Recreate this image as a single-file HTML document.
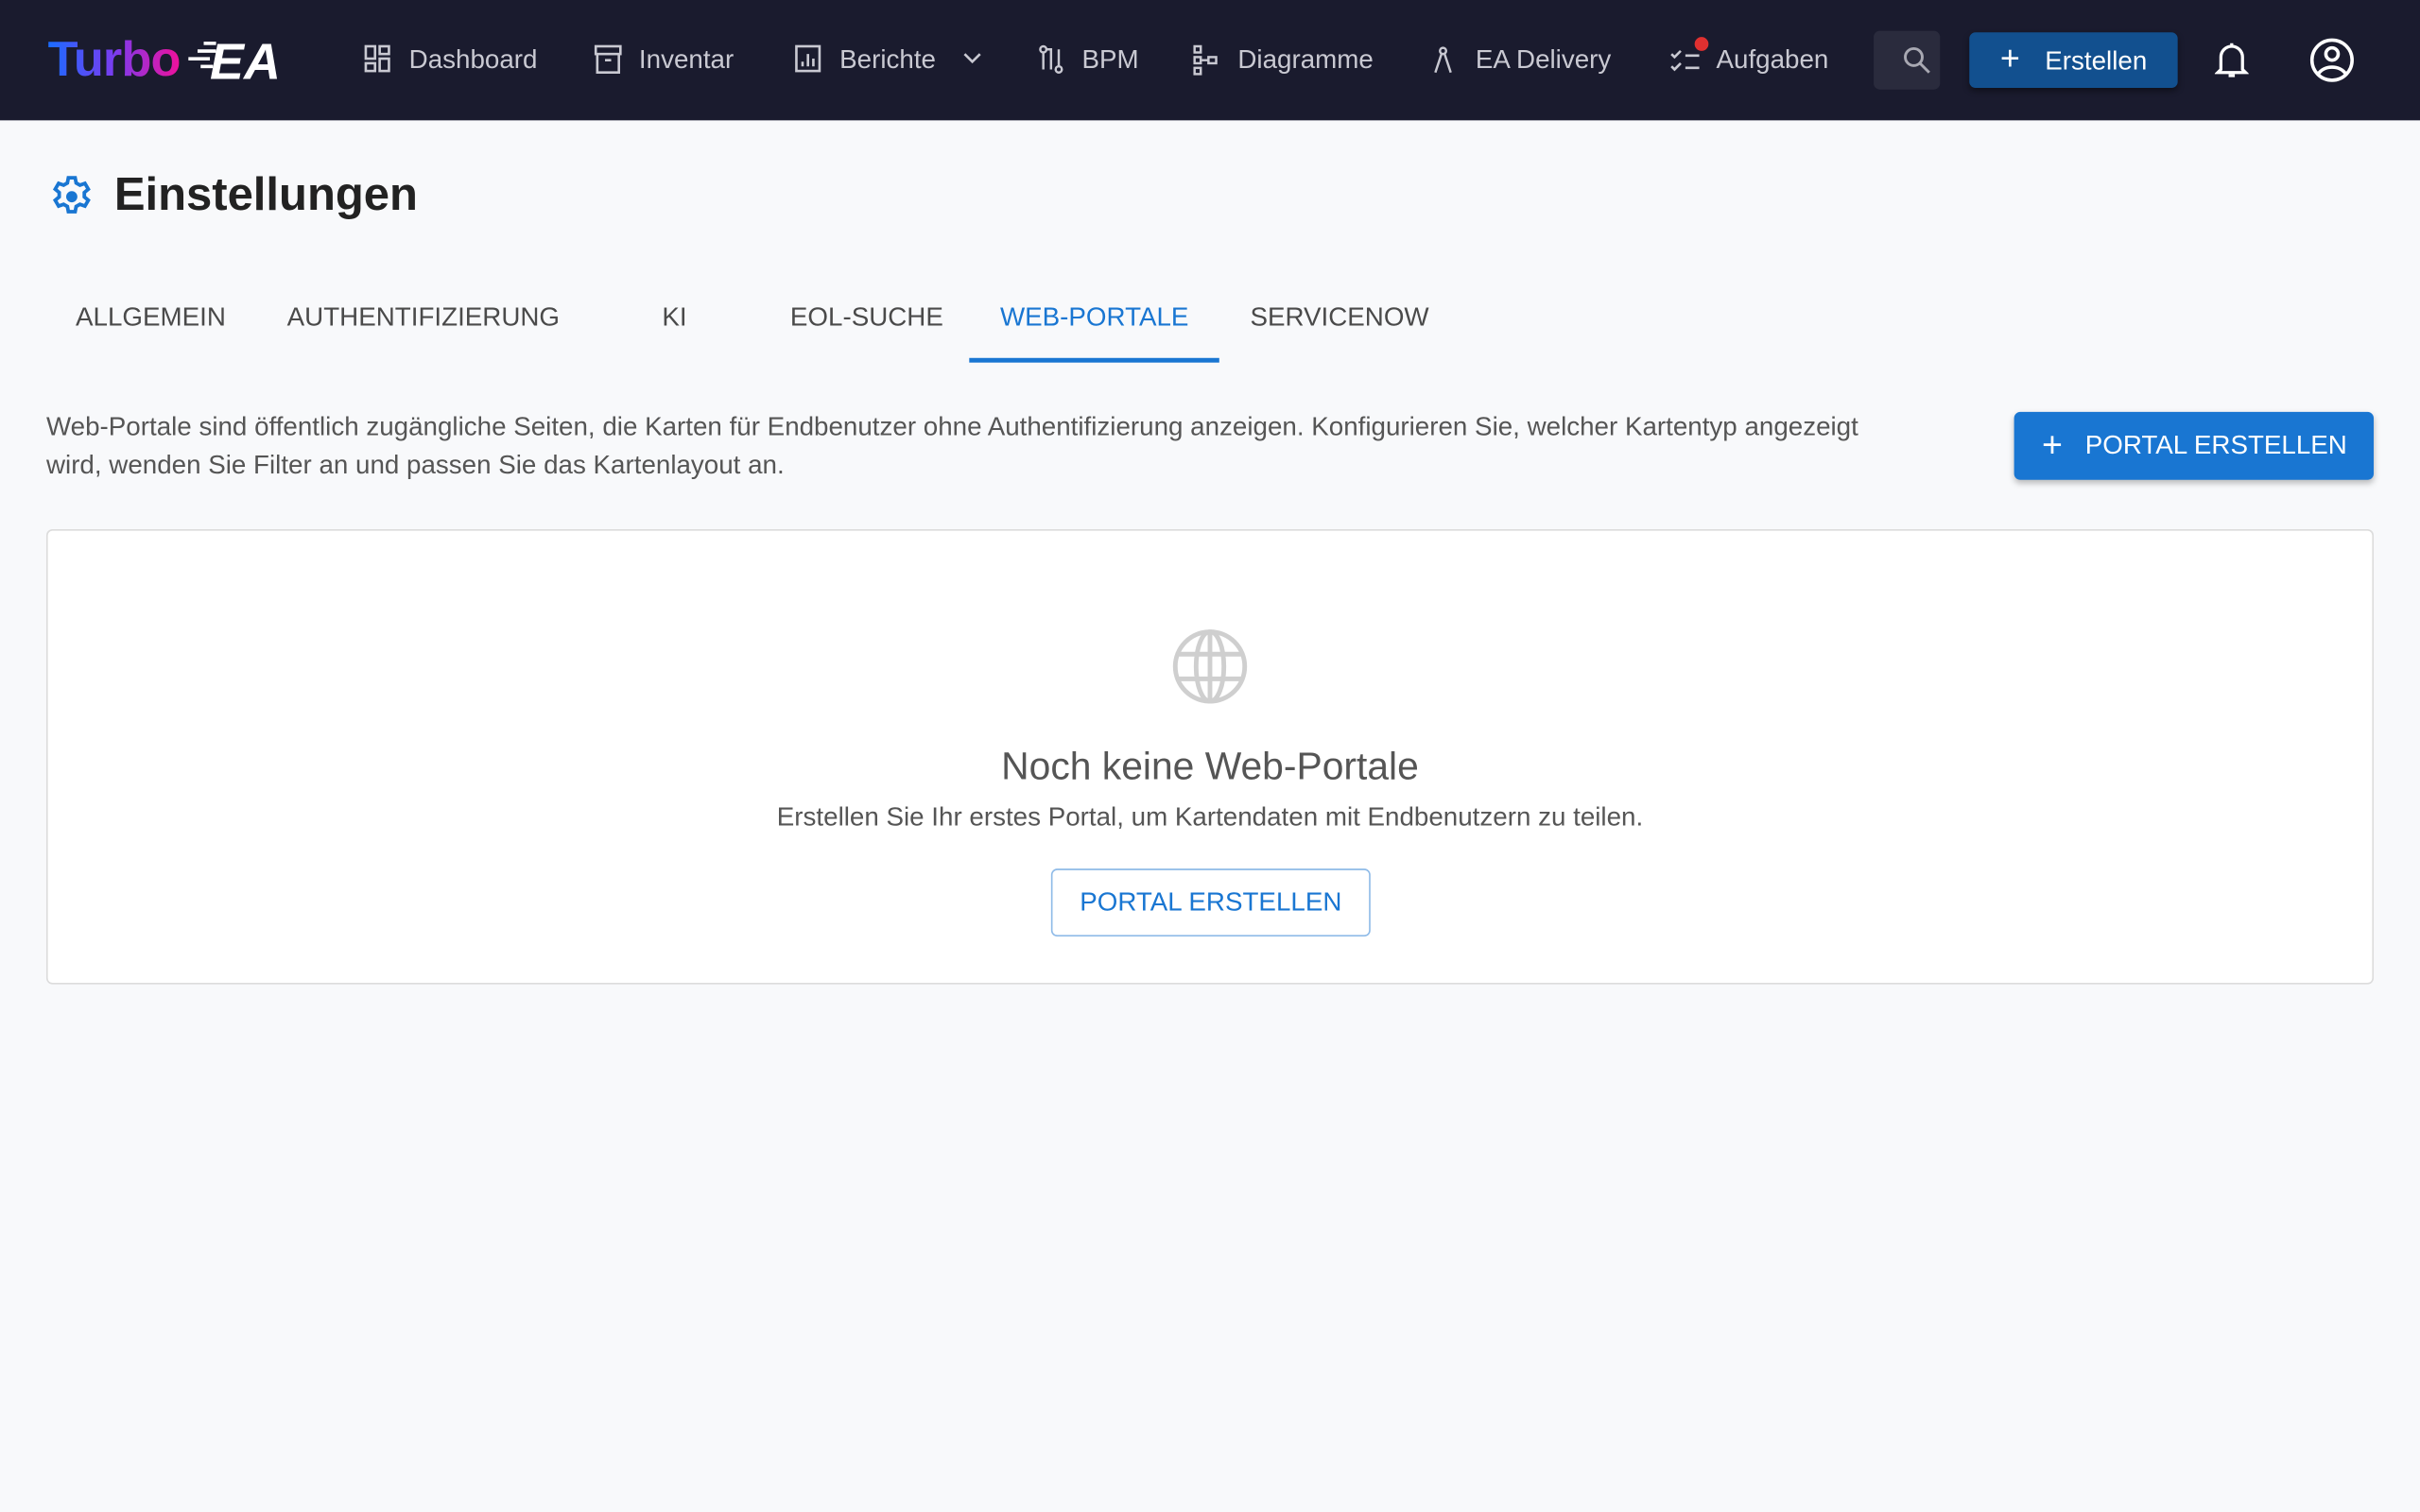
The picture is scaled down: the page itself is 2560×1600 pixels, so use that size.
<!DOCTYPE html>
<html><head><meta charset="utf-8"><style>
html,body{margin:0;padding:0;width:2560px;height:1600px;overflow:hidden;background:#f8f9fb}
#w{position:absolute;left:0;top:0;width:1568px;height:980px;transform:scale(1.632653);transform-origin:0 0;font-family:"Liberation Sans",sans-serif}
.nav{position:absolute;left:0;top:0;width:1568px;height:78px;background:#1a1b2e}
.ni{position:absolute;top:28px;font-size:17px;color:#c9c9d2;line-height:22px;white-space:nowrap}
.ic{position:absolute;top:29px}
.abs{position:absolute}
.tab{position:absolute;top:196px;font-size:17px;color:#4a4a4a;letter-spacing:0}
</style></head><body><div id="w">
<div class="nav">
 <div class="abs" style="left:31px;top:19px;font-size:32px;font-weight:bold;line-height:38px;letter-spacing:-0.5px;background:linear-gradient(90deg,#1a6cff,#7a3cf0 50%,#f0109a);-webkit-background-clip:text;color:transparent">Turbo</div>
 <svg class="abs" style="left:122px;top:25px" width="66" height="28" viewBox="0 0 66 28"><g fill="#fff"><rect x="10" y="2" width="8" height="2.2"/><rect x="6" y="7" width="12" height="2.2"/><rect x="0" y="12" width="14" height="2.2"/><rect x="8" y="17" width="8" height="2.2"/></g><text x="14" y="26" font-family="Liberation Sans" font-weight="bold" font-style="italic" font-size="33" fill="#fff">EA</text></svg>
 <svg class="ic" style="left:236px" width="17" height="18" viewBox="0 0 17 18" fill="none" stroke="#c9c9d2" stroke-width="1.6"><rect x="1" y="1" width="6" height="8"/><rect x="1" y="12" width="6" height="5"/><rect x="10" y="1" width="6" height="5"/><rect x="10" y="9" width="6" height="8"/></svg>
 <div class="ni" style="left:265px">Dashboard</div>
 <svg class="ic" style="left:385px" width="18" height="19" viewBox="0 0 18 19" fill="none" stroke="#c9c9d2" stroke-width="1.6"><rect x="1" y="1" width="16" height="5"/><path d="M2 6v12h14V6M7 10h4"/></svg>
 <div class="ni" style="left:414px">Inventar</div>
 <svg class="ic" style="left:515px" width="17" height="18" viewBox="0 0 17 18" fill="none" stroke="#c9c9d2" stroke-width="1.6"><rect x="1" y="1" width="15" height="16"/><path d="M5 14v-3M8.5 14V6M12 14V9"/></svg>
 <div class="ni" style="left:544px">Berichte</div>
 <svg class="ic" style="left:624px;top:34px" width="12" height="8" viewBox="0 0 12 8" fill="none" stroke="#c9c9d2" stroke-width="1.6"><path d="M1 1l5 5 5-5"/></svg>
 <svg class="ic" style="left:673px" width="16" height="19" viewBox="0 0 16 19" fill="none" stroke="#c9c9d2" stroke-width="1.5"><circle cx="3" cy="3" r="2"/><circle cx="13" cy="16" r="2"/><path d="M3 5v11M13 14V3M5 3h3v13"/></svg>
 <div class="ni" style="left:701px">BPM</div>
 <svg class="ic" style="left:773px" width="16" height="20" viewBox="0 0 16 20" fill="none" stroke="#c9c9d2" stroke-width="1.5"><rect x="1" y="1" width="4" height="4"/><rect x="1" y="8" width="4" height="4"/><rect x="1" y="15" width="4" height="4"/><rect x="10" y="8" width="5" height="4"/><path d="M5 10h5"/></svg>
 <div class="ni" style="left:802px">Diagramme</div>
 <svg class="ic" style="left:929px;top:30px" width="12" height="18" viewBox="0 0 12 18" fill="none" stroke="#c9c9d2" stroke-width="1.5"><circle cx="6" cy="3" r="2"/><path d="M5 5L1 17M7 5l4 12"/></svg>
 <div class="ni" style="left:956px">EA Delivery</div>
 <svg class="ic" style="left:1082px;top:31px" width="20" height="16" viewBox="0 0 20 16" fill="none" stroke="#c9c9d2" stroke-width="1.6"><path d="M1 4l2 2 4-4M1 12l2 2 4-4M10 5h9M10 13h9"/></svg>
 <div class="abs" style="left:1098px;top:24px;width:9px;height:9px;border-radius:50%;background:#e03030"></div>
 <div class="ni" style="left:1112px">Aufgaben</div>
 <div class="abs" style="left:1214px;top:20px;width:43px;height:38px;background:#2a2b3d;border-radius:4px"></div>
 <svg class="abs" style="left:1233px;top:30px" width="18" height="18" viewBox="0 0 18 18" fill="none" stroke="#a8a8b2" stroke-width="1.8"><circle cx="7" cy="7" r="5.5"/><path d="M11 11l6 6"/></svg>
 <div class="abs" style="left:1276px;top:21px;width:135px;height:36px;background:#12508f;border-radius:4px;box-shadow:0 2px 4px rgba(0,0,0,.4);color:#fff;font-size:17px;line-height:36px"><span style="position:absolute;left:20px;font-size:22px;top:-1px">+</span><span style="position:absolute;left:49px;top:1px">Erstellen</span></div>
 <svg class="abs" style="left:1435px;top:26px" width="22" height="26" viewBox="0 0 22 26" fill="none" stroke="#fff" stroke-width="2"><path d="M11 2v2M4 19V11a7 7 0 0 1 14 0v8l2 2H2z"/><path d="M9 23h4"/></svg>
 <svg class="abs" style="left:1496px;top:24px" width="30" height="30" viewBox="0 0 30 30" fill="none" stroke="#fff" stroke-width="2.2"><circle cx="15" cy="15" r="13"/><circle cx="15" cy="11" r="4"/><path d="M6 24c4-6 14-6 18 0"/></svg>
</div>
<svg class="abs" style="left:31px;top:112px" width="31" height="31" viewBox="0 0 24 24"><path fill="none" stroke="#1976d2" stroke-width="1.8" d="M10.3 2.5h3.4l.5 2.6 1.9 1.1 2.5-.9 1.7 2.9-2 1.7v2.2l2 1.7-1.7 2.9-2.5-.9-1.9 1.1-.5 2.6h-3.4l-.5-2.6-1.9-1.1-2.5.9-1.7-2.9 2-1.7v-2.2l-2-1.7 1.7-2.9 2.5.9 1.9-1.1z"/><circle cx="12" cy="12" r="2.8" fill="#1976d2"/></svg>
<div class="abs" style="left:74px;top:110px;font-size:30px;font-weight:bold;color:#222">Einstellungen</div>
<div class="tab" style="left:49px">ALLGEMEIN</div>
<div class="tab" style="left:186px">AUTHENTIFIZIERUNG</div>
<div class="tab" style="left:429px">KI</div>
<div class="tab" style="left:512px">EOL-SUCHE</div>
<div class="tab" style="left:648px;color:#1976d2">WEB-PORTALE</div>
<div class="tab" style="left:810px">SERVICENOW</div>
<div class="abs" style="left:628px;top:232px;width:162px;height:3px;background:#1976d2"></div>
<div class="abs" style="left:30px;top:265px;width:1200px;font-size:17px;line-height:24.5px;color:#555">Web-Portale sind öffentlich zugängliche Seiten, die Karten für Endbenutzer ohne Authentifizierung anzeigen. Konfigurieren Sie, welcher Kartentyp angezeigt wird, wenden Sie Filter an und passen Sie das Kartenlayout an.</div>
<div class="abs" style="left:1305px;top:267px;width:233px;height:44px;background:#1976d2;border-radius:4px;box-shadow:0 2px 4px rgba(0,0,0,.25);color:#fff;font-size:17px;line-height:44px"><span style="position:absolute;left:18px;font-size:23px;top:-1px">+</span><span style="position:absolute;left:46px;top:0">PORTAL ERSTELLEN</span></div>
<div class="abs" style="left:30px;top:343px;width:1506px;height:293px;background:#fff;border:1px solid #dcdcdc;border-radius:4px"></div>
<svg class="abs" style="left:759px;top:407px" width="50" height="50" viewBox="0 0 50 50" fill="none" stroke="#cfcfcf" stroke-width="3"><circle cx="25" cy="25" r="22.5"/><ellipse cx="25" cy="25" rx="9" ry="22.5"/><path d="M3 17h44M3 33h44M25 2.5v45"/></svg>
<div class="abs" style="left:0;width:1568px;top:483px;text-align:center;font-size:25px;color:#555">Noch keine Web-Portale</div>
<div class="abs" style="left:0;width:1568px;top:520px;text-align:center;font-size:17px;color:#555">Erstellen Sie Ihr erstes Portal, um Kartendaten mit Endbenutzern zu teilen.</div>
<div class="abs" style="left:681px;top:563px;width:205px;height:42px;border:1px solid #8fbbe8;border-radius:4px;text-align:center;line-height:42px;font-size:17px;color:#1976d2">PORTAL ERSTELLEN</div>
</div></body></html>
